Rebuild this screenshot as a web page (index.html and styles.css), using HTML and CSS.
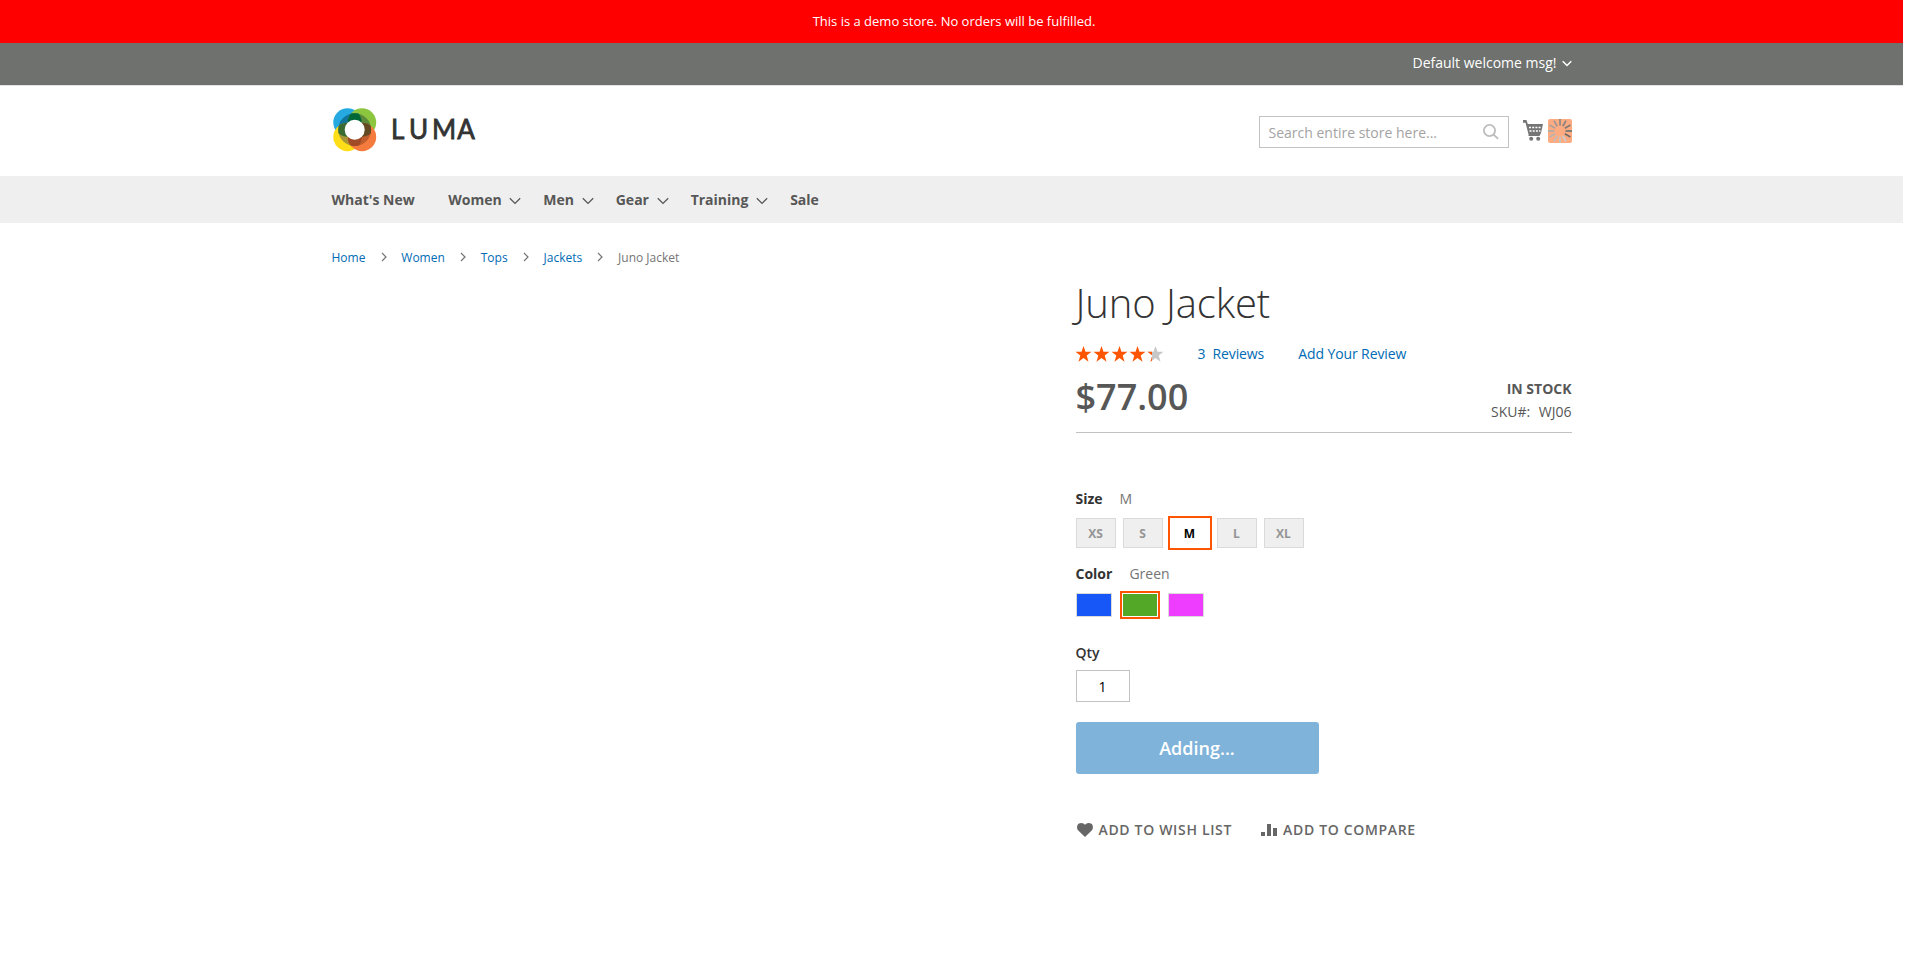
FILE: index.html
```html
<!DOCTYPE html>
<html lang="en">
<head>
<meta charset="utf-8">
<title>Juno Jacket</title>
<link rel="stylesheet" href="styles.css">
</head>
<body>
<div class="page">
  <div class="notice">This is a demo store. No orders will be fulfilled.</div>
  <div class="panel"><div class="container panel-inner">
    <span>Default welcome msg!</span>
    <svg class="panel-caret" width="10" height="7" viewBox="0 0 10 7"><path d="M.7 1.200 5 5.500 9.300 1.200"/></svg>
  </div></div>
  <header class="header container">
    <a class="logo">
      <svg width="148" height="44" viewBox="0 0 148 44">
        <defs>
          <clipPath id="left"><circle cx="14.5" cy="14.5" r="14.2"/></clipPath>
          <clipPath id="right"><circle cx="29" cy="29" r="14.2"/></clipPath>
          <clipPath id="ring"><circle cx="21.7" cy="21.7" r="16.4"/></clipPath>
        </defs>
        <circle cx="14.5" cy="14.5" r="14.2" fill="#26a9e0"/>
        <circle cx="29" cy="14.5" r="14.2" fill="#8cc63f"/>
        <circle cx="14.5" cy="29" r="14.2" fill="#ffde17"/>
        <circle cx="29" cy="29" r="14.2" fill="#f47b3d"/>
        <g clip-path="url(#ring)">
          <circle cx="14.5" cy="14.5" r="14.2" fill="#10749b"/>
          <circle cx="29" cy="14.5" r="14.2" fill="#5d8a3c"/>
          <circle cx="14.5" cy="29" r="14.2" fill="#a99735"/>
          <circle cx="29" cy="29" r="14.2" fill="#c15c2d"/>
          <g clip-path="url(#left)">
            <circle cx="29" cy="14.5" r="14.2" fill="#006837"/>
            <circle cx="14.5" cy="29" r="14.2" fill="#3a6b30"/>
          </g>
          <g clip-path="url(#right)">
            <circle cx="29" cy="14.5" r="14.2" fill="#634a22"/>
            <circle cx="14.5" cy="29" r="14.2" fill="#a04a26"/>
          </g>
        </g>
        <circle cx="21.7" cy="21.7" r="10" fill="#fff"/>
        <text class="logo-text" x="58 76 99 124.300" y="30.700">LUMA</text>
      </svg>
    </a>
    <div class="header-tools">
      <div class="search"><span>Search entire store here...</span>
        <svg width="16" height="16" viewBox="0 0 16 16"><circle cx="6.5" cy="6.5" r="5.600"/><path d="m10.500 10.500 4.600 4.400"/></svg>
      </div>
      <div class="minicart">
        <svg class="cart" width="20" height="21" viewBox="0 0 20 21"><path d="M0 0h3.500l1.300 4H20l-2 9-1.500 3H5.500v-1.800L2.500 2.800H0z"/><g class="cart-holes"><path d="M6 7.500h12M6.500 11h11"/></g><circle cx="8.200" cy="18.800" r="2"/><circle cx="15.200" cy="18.800" r="2"/></svg>
        <div class="loading">
          <svg width="24" height="24" viewBox="-12 -12 24 24">
            <path d="M0-5.500V-12" stroke="#8f8a88"/><path d="M2.800-4.800 6-10.400" stroke="#8a8582"/><path d="M4.800-2.800 10.400-6" stroke="#807b78"/>
            <path d="M5.500 0H12" stroke="#777"/><path d="M4.800 2.800 10.400 6" stroke="#706c69"/><path d="M2.800 4.800 6 10.400" stroke="#ccc"/>
            <path d="M0 5.500V12" stroke="#c7c4c2"/><path d="M-2.800 4.800-6 10.400" stroke="#c0bbb8"/><path d="M-4.800 2.800-10.400 6" stroke="#b8b3b0"/>
            <path d="M-5.500 0H-12" stroke="#b0aba8"/><path d="M-4.800-2.800-10.400-6" stroke="#a7a29f"/><path d="M-2.800-4.800-6-10.400" stroke="#9d9895"/>
          </svg>
        </div>
      </div>
    </div>
  </header>
  <nav class="nav"><div class="container nav-inner">
    <a>What's New</a>
    <a class="parent">Women<svg width="12" height="8" viewBox="0 0 12 8"><path d="M.8 1.200 6 6.400l5.200-5.200"/></svg></a>
    <a class="parent">Men<svg width="12" height="8" viewBox="0 0 12 8"><path d="M.8 1.200 6 6.400l5.200-5.200"/></svg></a>
    <a class="parent">Gear<svg width="12" height="8" viewBox="0 0 12 8"><path d="M.8 1.200 6 6.400l5.200-5.200"/></svg></a>
    <a class="parent">Training<svg width="12" height="8" viewBox="0 0 12 8"><path d="M.8 1.200 6 6.400l5.200-5.200"/></svg></a>
    <a>Sale</a>
  </div></nav>
  <div class="crumbs container">
    <a>Home</a><svg width="6" height="10" viewBox="0 0 6 10"><path d="M1 1l4 4-4 4"/></svg>
    <a>Women</a><svg width="6" height="10" viewBox="0 0 6 10"><path d="M1 1l4 4-4 4"/></svg>
    <a>Tops</a><svg width="6" height="10" viewBox="0 0 6 10"><path d="M1 1l4 4-4 4"/></svg>
    <a>Jackets</a><svg width="6" height="10" viewBox="0 0 6 10"><path d="M1 1l4 4-4 4"/></svg>
    <span>Juno Jacket</span>
  </div>
  <main class="container main">
    <section class="product">
      <h1>Juno Jacket</h1>
      <div class="reviews">
        <svg width="90" height="18" viewBox="0 0 90 18">
          <defs>
            <path id="star" d="M7.500 0 9.500 5.800H15.500L10.700 9.500 12.500 15.800 7.500 12.100 2.500 15.800 4.300 9.500-.5 5.800H5.500z"/>
            <clipPath id="rated"><path d="M-1-1h77v20H-1z"/></clipPath>
          </defs>
          <g fill="#c7c7c7"><use href="#star" x="72"/></g>
          <g fill="#ff5501" clip-path="url(#rated)"><use href="#star"/><use href="#star" x="18"/><use href="#star" x="36"/><use href="#star" x="54"/><use href="#star" x="72"/></g>
        </svg>
        <a class="count">3&nbsp; Reviews</a><a class="write">Add Your Review</a>
      </div>
      <div class="price-row">
        <div class="price">$77.00</div>
        <div class="stock"><b>IN STOCK</b><span class="sku">SKU#:<span>WJ06</span></span></div>
      </div>
      <div class="label size-label"><b>Size</b><span>M</span></div>
      <div class="sizes"><i>XS</i><i>S</i><i class="selected">M</i><i>L</i><i>XL</i></div>
      <div class="label color-label"><b>Color</b><span>Green</span></div>
      <div class="colors"><i class="blue"></i><i class="green"></i><i class="pink"></i></div>
      <div class="qty-label">Qty</div>
      <div class="qty">1</div>
      <button class="add">Adding...</button>
      <div class="links">
        <a><svg width="16" height="14" viewBox="0 0 16 14"><path d="M8 14 1.300 7.600C-.6 5.500-.2 1.800 2 .6 4.300-.5 6.800.2 8 2 9.200.2 11.700-.5 14 .6c2.200 1.200 2.600 4.900.7 7z"/></svg>ADD TO WISH LIST</a>
        <a><svg width="16" height="12" viewBox="0 0 16 12"><path d="M0 8h4v4H0zM6 0h4v12H6zM12 4h4v8h-4z"/></svg>ADD TO COMPARE</a>
      </div>
    </section>
  </main>
</div>
</body>
</html>
```
FILE: styles.css
```css
* { box-sizing: border-box; }
body { margin: 0; background: #fff; color: #575757; font: 14px/20px "Open Sans", "Noto Sans", sans-serif; overflow: hidden; }
.page { width: 1903px; height: 955px; }
.container { width: 1280px; margin: 0 auto; padding: 0 20px; }
svg { display: block; flex: none; overflow: visible; }
a { color: #006bb4; }
b { font-weight: 700; }
i { font-style: normal; }

.notice { height: 43px; background: #f00; color: #fff; font-size: 13px; line-height: 43px; text-align: center; padding-left: 5px; }
.panel { height: 43px; background: #6e716e; border-bottom: 1px solid #e4e2e2; color: #fff; }
.panel-inner { display: flex; justify-content: flex-end; padding-top: 10px; gap: 5px; }
.panel-caret { margin-top: 7px; fill: none; stroke: #fff; stroke-width: 1.5; }

.header { height: 90px; display: flex; justify-content: space-between; padding-top: 22px; }
.logo { margin-left: 1px; }
.logo-text { font-family: Lato, sans-serif; font-size: 26px; font-weight: 400; fill: #333; stroke: #333; stroke-width: .8px; }
.header-tools { display: flex; align-items: flex-start; padding-top: 8px; }
.search { width: 250px; height: 32px; border: 1px solid #c2c2c2; display: flex; justify-content: space-between; align-items: center; padding: 1px 9px 0 9px; color: #a3a3a3; }
.search svg { margin-top: -2px; fill: none; stroke: #bdbdbd; stroke-width: 1.8; }
.minicart { display: flex; margin-left: 14px; padding-top: 3px; gap: 5px; }
.cart { margin-top: 1px; fill: #757575; }
.cart-holes { fill: none; stroke: #fff; stroke-width: 1.6; stroke-dasharray: 2 1.2; }
.loading { width: 24px; height: 24px; background: #ffab82; border-radius: 2px; }
.loading svg { stroke-width: 1.8; }

.nav { height: 47px; background: #efefef; }
.nav-inner { display: flex; font-weight: 700; line-height: 47px; }
.nav a { color: #575757; margin-right: 33.5px; display: flex; align-items: center; }
.nav a.parent { gap: 7.7px; margin-right: 22px; }
.nav svg { margin-top: 3px; fill: none; stroke: #575757; stroke-width: 1.3; }

.crumbs { height: 55px; display: flex; align-items: flex-start; padding-top: 25px; font-size: 12px; color: #757575; }
.crumbs svg { margin: 4px 14.6px 0 15.3px; fill: none; stroke: #757575; stroke-width: 1.2; }

.main { display: flex; justify-content: flex-end; }
.product { width: 496px; }
h1 { margin: 3px 0 0; height: 62px; font-size: 40px; font-weight: 300; line-height: 44px; letter-spacing: -.1px; color: #333; }
.reviews { height: 29px; display: flex; padding-top: 1px; }
.reviews svg { margin-top: 2px; }
.count { margin: 0 34px 0 32px; letter-spacing: -.1px; }
.write { letter-spacing: -.1px; }
.price-row { height: 61px; display: flex; justify-content: space-between; border-bottom: 1px solid #c1c1c1; }
.price { font-size: 36px; font-weight: 600; line-height: 50px; }
.stock { display: flex; flex-direction: column; text-align: right; padding-top: 7px; gap: 3px; }
.sku { display: flex; justify-content: flex-end; gap: 8.5px; }
.label { display: flex; gap: 17px; color: #333; }
.label span { color: #757575; }
.size-label { margin-top: 56px; }
.sizes { display: flex; gap: 7px; margin-top: 9px; font-size: 12px; font-weight: 700; line-height: 30px; text-align: center; }
.sizes i { width: 40px; height: 30px; background: #efefef; border: 1px solid #dadada; color: #949494; }
.sizes .selected { background: #fff; border-color: #fff; outline: 2px solid #ff5501; color: #000; }
.color-label { margin-top: 16px; }
.colors { display: flex; gap: 10px; margin-top: 9px; }
.colors i { width: 36px; height: 24px; border: 1px solid #dadada; }
.colors .blue { background: #1857f7; }
.colors .green { background: #53a828; border-color: #fff; outline: 2px solid #ff5501; }
.colors .pink { background: #ef3dff; }
.qty-label { margin-top: 26px; color: #333; font-weight: 600; }
.qty { width: 54px; height: 32px; margin-top: 7px; border: 1px solid #c2c2c2; color: #000; line-height: 32px; text-align: center; }
.add { display: block; width: 243px; height: 52px; margin-top: 20px; padding: 0; border: 0; border-radius: 3px; background: #7fb3d9; color: #fff; font: 600 18px/52px "Open Sans", sans-serif; }
.links { display: flex; gap: 29px; margin: 46px 0 0 1px; }
.links a { display: flex; align-items: center; gap: 6px; color: #666; font-weight: 600; letter-spacing: .67px; }
.links svg { fill: #666; }
```
